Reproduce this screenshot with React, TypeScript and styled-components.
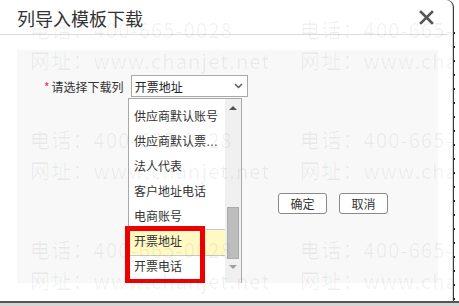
import React from 'react';
import styled, { createGlobalStyle } from 'styled-components';

const GlobalStyle = createGlobalStyle`
  html, body {
    margin: 0;
    padding: 0;
    width: 459px;
    height: 306px;
    overflow: hidden;
    background: #fff;
    font-family: "Noto Sans CJK SC", "Noto Sans", sans-serif;
  }
`;

const Page = styled.div`
  position: relative;
  width: 459px;
  height: 306px;
  overflow: hidden;
  display: grid;
  grid-template-rows: 301px 5px;
  grid-template-columns: 452px 7px;
`;

const Dialog = styled.div`
  position: relative;
  background: #fff;
  border-top-right-radius: 7px;
  box-shadow: 1px 0 0 #d8d8d8, 2px 0 0 #3a3a3a;
  display: flex;
  flex-direction: column;
`;

const RightEdge = styled.div`
  background: repeating-linear-gradient(
    to bottom,
    #fff 0,
    #fff 12px,
    #222 12px,
    #222 14px
  );
  background-size: 2px 100%;
  background-repeat: no-repeat;
  background-position: 1px 20px;
`;

const BottomStrip = styled.div`
  grid-column: 1 / span 2;
  background: #d6d6d6;
  border-top: 2px solid #555;
`;

const Header = styled.div`
  height: 34px;
  display: flex;
  align-items: center;
  justify-content: space-between;
  padding: 0 14px 0 17px;
  border-bottom: 1px solid #dcdcdc;
  margin-right: 4px;
`;

const Title = styled.span`
  font-size: 18px;
  color: #333;
  line-height: 34px;
  padding-top: 1px;
`;

const CloseButton = styled.button`
  border: none;
  background: transparent;
  padding: 0;
  width: 16px;
  height: 16px;
  margin-top: 1px;
  display: flex;
  align-items: center;
  justify-content: center;
  cursor: pointer;
`;

const Body = styled.div`
  flex: 1;
  padding: 15px 14px 18px 17px;
`;

const Panel = styled.div`
  position: relative;
  height: 100%;
  background: #f8f8f8;
  overflow: hidden;
  display: flex;
  flex-direction: column;
`;

const FormRow = styled.div`
  display: flex;
  align-items: center;
  padding: 25px 0 0 27px;
  gap: 3px;
  font-size: 12px;
  color: #333;
`;

const Required = styled.span`
  color: #e4393c;
  margin-right: 2px;
`;

const SelectBox = styled.div`
  position: relative;
  width: 108px;
  height: 20px;
  border: 1px solid #a9a9a9;
  background: #fff;
  display: flex;
  align-items: center;
  justify-content: space-between;
  padding: 0 4px 0 3px;
  box-sizing: content-box;
  margin-left: 4px;
  font-size: 12px;
  color: #222;
`;

const DropList = styled.div`
  position: absolute;
  left: 111px;
  top: 48px;
  width: 112px;
  height: 190px;
  border: 1px solid #a9a9a9;
  background: #fff;
  display: flex;
`;

const Items = styled.div`
  flex: 1;
  padding-top: 6px;
  display: flex;
  flex-direction: column;
`;

const Item = styled.div<{ $active?: boolean }>`
  height: 25px;
  line-height: 25px;
  padding: 0 4px 0 5px;
  font-family: "Liberation Sans", "Noto Sans CJK SC", sans-serif;
  font-size: 12px;
  color: #333;
  white-space: nowrap;
  overflow: hidden;
  text-overflow: ellipsis;
  max-width: 87px;
  box-sizing: content-box;
  background: ${({ $active }) => ($active ? '#fff9c4' : 'transparent')};
  border-top: 1px solid ${({ $active }) => ($active ? '#c8c8c8' : 'transparent')};
  border-bottom: 1px solid ${({ $active }) => ($active ? '#c8c8c8' : 'transparent')};
  margin: -1px 0;
`;

const ScrollBar = styled.div`
  width: 16px;
  background: #f0f0f0;
  display: flex;
  flex-direction: column;
  align-items: center;
  padding-top: 7px;
`;

const Arrow = styled.div<{ $down?: boolean }>`
  width: 0;
  height: 0;
  border-left: 4px solid transparent;
  border-right: 4px solid transparent;
  ${({ $down }) =>
    $down
      ? 'border-top: 4px solid #a0a0a0; margin-top: 6px;'
      : 'border-bottom: 4px solid #505050;'}
`;

const Thumb = styled.div`
  width: 12px;
  height: 52px;
  margin-top: 97px;
  background: #bdbdbd;
  border: 1px solid #ababab;
  box-sizing: border-box;
`;

const HighlightFrame = styled.div`
  position: absolute;
  left: 108px;
  top: 176px;
  width: 80px;
  height: 58px;
  border: 5px solid #ee0000;
  box-sizing: border-box;
  pointer-events: none;
`;

const Buttons = styled.div`
  display: flex;
  gap: 12px;
  padding: 96px 0 0 261px;
`;

const Button = styled.button`
  width: 49px;
  height: 21px;
  border: 1px solid #8a8a8a;
  border-radius: 3px;
  background: #fff;
  font-family: "Noto Sans CJK SC", sans-serif;
  font-size: 12px;
  color: #333;
  padding: 0;
  cursor: pointer;
`;

const Watermark = styled.div`
  position: absolute;
  inset: 0;
  pointer-events: none;
  padding: 14px 0 0 30px;
  display: grid;
  grid-template-columns: repeat(2, 270px);
  grid-auto-rows: 110px;
  overflow: hidden;
`;

const Mark = styled.div`
  font-size: 20px;
  line-height: 31px;
  letter-spacing: 1.2px;
  color: rgba(0, 0, 0, 0.06);
  white-space: nowrap;
`;

const columns = [
  '供应商默认账号',
  '供应商默认票据地址',
  '法人代表',
  '客户地址电话',
  '电商账号',
  '开票地址',
  '开票电话',
];

export default function App() {
  return (
    <>
      <GlobalStyle />
      <Page>
        <Dialog>
          <Header>
            <Title>列导入模板下载</Title>
            <CloseButton aria-label="close">
              <svg width="15" height="15" viewBox="0 0 15 15">
                <path d="M2 2 L13 13 M13 2 L2 13" stroke="#555" strokeWidth="2.6" strokeLinecap="square" />
              </svg>
            </CloseButton>
          </Header>
          <Body>
            <Panel>
              <FormRow>
                <span>
                  <Required>*</Required>请选择下载列
                </span>
                <SelectBox>
                  <span>开票地址</span>
                  <svg width="9" height="6" viewBox="0 0 9 6">
                    <path d="M1 1 L4.5 4.5 L8 1" stroke="#555" strokeWidth="1.4" fill="none" />
                  </svg>
                </SelectBox>
              </FormRow>
              <DropList>
                <Items>
                  {columns.map((c) => (
                    <Item key={c} $active={c === '开票地址'}>
                      {c}
                    </Item>
                  ))}
                </Items>
                <ScrollBar>
                  <Arrow />
                  <Thumb />
                  <Arrow $down />
                </ScrollBar>
              </DropList>
              <HighlightFrame />
              <Buttons>
                <Button>确定</Button>
                <Button>取消</Button>
              </Buttons>
            </Panel>
          </Body>
          <Watermark>
            {Array.from({ length: 6 }).map((_, i) => (
              <div key={i}>
                <Mark>电话：400-665-0028</Mark>
                <Mark>网址：www.chanjet.net</Mark>
              </div>
            ))}
          </Watermark>
        </Dialog>
        <RightEdge />
        <BottomStrip />
      </Page>
    </>
  );
}
